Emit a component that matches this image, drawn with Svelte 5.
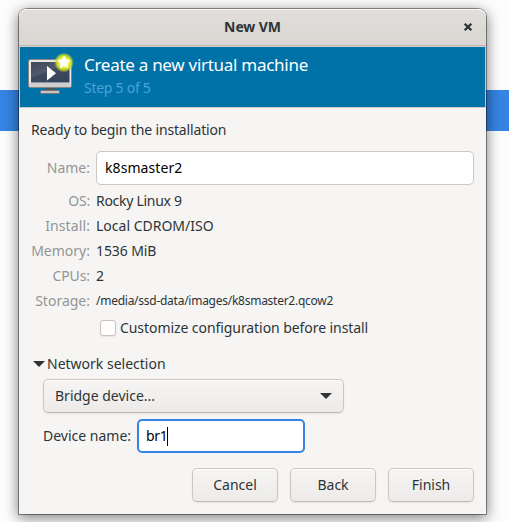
<script>
  const details = [
    ['OS:', 'Rocky Linux 9', '-.2px', '-.28px'],
    ['Install:', 'Local CDROM/ISO', '.1px', '0px'],
    ['Memory:', '1536 MiB', '0px', '-.1px'],
    ['CPUs:', '2', '-.1px', '0px'],
    ['Storage:', '/media/ssd-data/images/k8smaster2.qcow2', '0px', '-.26px']
  ];
  let customize = $state(false);
</script>

<div class="desktop">
  <div class="selection"></div>
  <main class="window">
    <header class="titlebar">
      <h1>New VM</h1>
      <svg class="close" width="10" height="10" viewBox="0 0 10 10"><path d="M1.7 1.7 8.3 8.3M8.3 1.7 1.7 8.3" stroke="#2e3436" stroke-width="2.3" /></svg>
    </header>
    <section class="banner">
      <svg class="vm" width="48" height="44" viewBox="0 0 48 44">
        <defs>
          <linearGradient id="screen" x1="0" y1="0" x2="0.6" y2="1"><stop offset="0" stop-color="#31394b" /><stop offset="0.5" stop-color="#414c60" /><stop offset="1" stop-color="#36435c" /></linearGradient>
          <radialGradient id="glow"><stop offset="0.5" stop-color="#eaf32a" /><stop offset="0.75" stop-color="#cfdf20" stop-opacity="0.85" /><stop offset="1" stop-color="#b0cf28" stop-opacity="0" /></radialGradient>
        </defs>
        <path d="M17 34h11v4H17z" fill="#545454" />
        <rect x="12.5" y="37.5" width="19" height="3" rx="1" fill="#c4c4c4" stroke="#777777" />
        <rect x="0.5" y="6.500" width="43" height="28" rx="2" fill="#e9e9e9" stroke="#858585" />
        <rect x="1" y="30" width="42" height="4" rx="1" fill="#cfcfcf" />
        <rect x="3" y="9" width="38.5" height="20.5" fill="url(#screen)" />
        <path d="M3 9h38.500L3 25z" fill="#ffffff" opacity="0.08" />
        <path d="M19 13v14.500l9-7.250z" fill="#ffffff" />
        <circle cx="36" cy="9.500" r="10" fill="url(#glow)" />
        <path d="m36 3.200 1.900 3.600 4.200.6-3.100 3 .7 4.200-3.700-2-3.700 2 .7-4.200-3.100-3 4.200-.6z" fill="#ffffff" stroke="#ffffff" stroke-linejoin="round" />
      </svg>
      <div class="heading">
        <h2>Create a new virtual machine</h2>
        <p>Step 5 of 5</p>
      </div>
    </section>
    <section class="content">
      <p class="ready">Ready to begin the installation</p>
      <div class="row name">
        <span class="label">Name:</span>
        <div class="field">k8smaster2</div>
      </div>
      {#each details as [label, value, labelSpacing, valueSpacing]}
        <div class="row" class:storage={label === 'Storage:'}>
          <span class="label" style:letter-spacing={labelSpacing}>{label}</span>
          <span class="value" style:letter-spacing={valueSpacing}>{value}</span>
        </div>
      {/each}
      <label class="customize">
        <input type="checkbox" bind:checked={customize} />
        <span>Customize configuration before install</span>
      </label>
      <div class="expander">
        <svg width="12" height="6" viewBox="0 0 12 6"><path d="M0 0h12L6 6z" fill="#2e3436" /></svg>
        <span>Network selection</span>
      </div>
      <div class="button combo">
        <span>Bridge device...</span>
        <svg width="12" height="6" viewBox="0 0 12 6"><path d="M0 0h12L6 6z" fill="#2e3436" /></svg>
      </div>
      <div class="device">
        <span>Device name:</span>
        <div class="field focused"><span>br1</span><i></i></div>
      </div>
      <footer>
        <div class="button">Cancel</div>
        <div class="button">Back</div>
        <div class="button">Finish</div>
      </footer>
    </section>
  </main>
</div>

<style>
  :global(body) { background: #fdfdfd; }
  * { box-sizing: border-box; }
  h1, h2, p { margin: 0; font-weight: 400; }
  svg { display: block; flex: none; }
  .desktop {
    position: relative;
    width: 509px;
    height: 522px;
    padding: 9px 0 0 19px;
    overflow: hidden;
    background: #fdfdfd;
    color: #2e3436;
    font: 14px/20px "Noto Sans", "Open Sans", sans-serif;
    letter-spacing: 0;
    white-space: nowrap;
  }
  .selection { position: absolute; top: 90px; left: 0; width: 100%; height: 41px; background: #3584e4; }
  .window {
    position: relative;
    width: 467px;
    height: 505px;
    border-radius: 8px 8px 0 0;
    background: #f6f5f4;
    box-shadow: 0 0 0 1px rgba(0,0,0,.4), 0 3px 14px 1px rgba(0,0,0,.5);
  }
  .titlebar {
    display: flex;
    align-items: center;
    justify-content: center;
    position: relative;
    height: 37px;
    border-bottom: 1px solid #bfb8b1;
    border-radius: 8px 8px 0 0;
    background: linear-gradient(#e1dedb, #dad6d2);
    box-shadow: inset 0 1px #f9f8f7;
  }
  h1 { font-size: 14px; font-weight: 700; line-height: 20px; letter-spacing: -.1px; }
  .close { position: absolute; right: 13px; top: 13px; }
  .banner {
    display: flex;
    height: 62px;
    padding: 6px 0 0 8px;
    border: 1px solid #cdc7c2;
    border-top-color: #d5d0cc;
    background: #0072a8;
  }
  .vm { overflow: visible; }
  .heading { margin-left: 8px; }
  h2 { color: #fff; font-size: 17px; line-height: 24px; letter-spacing: -.28px; }
  .heading p { margin-top: 1px; color: #4ba3d7; line-height: 20px; letter-spacing: -.26px; }
  .content { padding: 12px 12px 0; }
  .ready { letter-spacing: -.15px; }
  .row { display: flex; align-items: center; height: 25px; }
  .name { height: 34px; margin-top: 11px; margin-bottom: 3px; }
  .name .label { letter-spacing: 0; }
  .label { width: 59px; margin-right: 6px; text-align: right; color: #929595; }
  .storage .value { font-size: 12px; }
  .field {
    display: flex;
    align-items: center;
    height: 34px;
    padding: 0 8px;
    border: 1px solid #cdc7c2;
    border-radius: 5px;
    background: #fff;
    color: #000;
  }
  .name .field { flex: 1; letter-spacing: .08px; }
  .customize { display: flex; align-items: center; height: 20px; margin: 5px 0 0 69px; letter-spacing: -.07px; }
  input { appearance: none; width: 16px; height: 16px; margin: 0 4px 0 0; border: 1px solid #c9c2bc; border-radius: 3px; background: #fff; box-shadow: 0 1px 1px #0001; }
  .expander { display: flex; align-items: center; gap: 2px; height: 20px; margin: 16px 0 5px 2px; }
  .button {
    display: flex;
    align-items: center;
    justify-content: center;
    width: 86px;
    height: 34px;
    border: 1px solid #cdc7c2;
    border-bottom-color: #bfb8b1;
    border-radius: 5px;
    background: linear-gradient(#f6f5f4, #edebe9);
    box-shadow: inset 0 1px #fff, 0 1px 2px #0001;
  }
  .combo { justify-content: space-between; width: 301px; margin-left: 12px; padding: 0 11px; }
  .device { display: flex; align-items: center; margin: 6px 0 0 12px; }
  .device > span { width: 94px; }
  .focused { width: 168px; padding: 0 7px; border: 2px solid #3584e4; letter-spacing: -.35px; }
  .focused i { width: 1px; height: 19px; background: #000; }
  footer { display: flex; justify-content: flex-end; gap: 12px; margin-top: 15px; }
</style>
